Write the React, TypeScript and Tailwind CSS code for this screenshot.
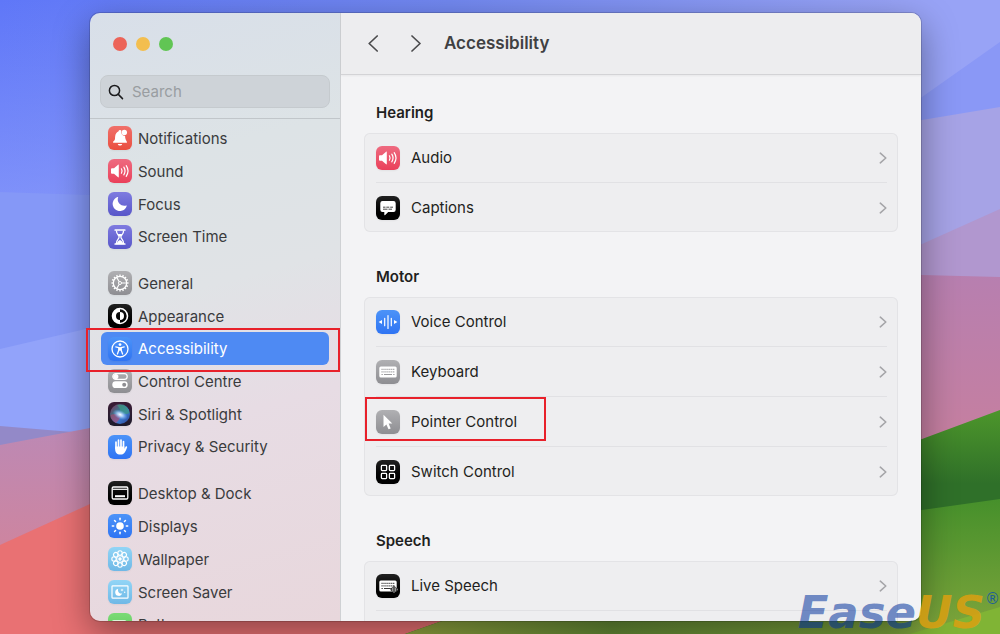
import type { ReactNode } from 'react'

interface Item {
  label: string
  icon: ReactNode
  selected?: boolean
}

interface TileProps {
  color: string
  children: ReactNode
}

interface SectionProps {
  title: string
  items: Item[]
  continues?: boolean
}

const RED = 'from-[#f0706a] to-[#ea4e3f]'
const PINK = 'from-[#ee6a80] to-[#ea3f5a]'
const INDIGO = 'from-[#7f7be0] to-[#5856c9]'
const GRAY = 'from-[#b0b0b3] to-[#8e8e92]'
const BLACK = 'from-[#222222] to-[#000000]'
const BLUE = 'from-[#4c93f8] to-[#2f74f3]'
const SKY = 'from-[#92d5f6] to-[#6fb8e6]'
const GREEN = 'from-[#7bdb76] to-[#5bc758]'

function Tile({ color, children }: TileProps) {
  return (
    <span className={`block size-6 shrink-0 rounded-md bg-linear-to-b shadow-xs ${color}`}>
      <svg viewBox="0 0 24 24" className="size-6" fill="none" stroke="none" aria-hidden="true">
        {children}
      </svg>
    </span>
  )
}

function SpeakerIcon() {
  return (
    <Tile color={PINK}>
      <path d="M3 10.2c0-.6.3-.9.9-.9h2.1l3.8-3.4c.5-.5 1-.3 1 .4v11.4c0 .7-.5.9-1 .4l-3.800-3.400H3.900c-.6 0-.9-.3-.9-.9z" fill="#fff" />
      <path d="M13.400 9.800c.8 1.300.8 3.100 0 4.400M15.800 8.200c1.500 2.300 1.500 5.300 0 7.600M18.200 6.700c2.200 3.200 2.200 7.400 0 10.600" stroke="#fff" strokeWidth="1.2" strokeLinecap="round" />
    </Tile>
  )
}

function KeyboardGlyph({ keys }: { keys: string }) {
  return (
    <>
      <rect x="3.3" y="6.500" width="17.4" height="11" rx="1.5" fill="#fff" />
      <path d="M5.5 9.300h13M5.5 11.800h13" stroke={keys} strokeWidth="1.2" strokeDasharray="1.1 0.85" />
      <path d="M5.5 14.500h1.300M8 14.500h8M17.200 14.500h1.300" stroke={keys} strokeWidth="1.1" />
    </>
  )
}

const teeth = Array.from({ length: 16 }, (_, i) => i * 22.5)
const rays = Array.from({ length: 8 }, (_, i) => i * 45)

const sidebarGroups: { height: string; items: Item[] }[] = [
  {
    height: 'h-[131px]',
    items: [
      {
        label: 'Notifications',
        icon: (
          <Tile color={RED}>
            <path d="M4.9 16.2c0-.7 2-1.700 2.100-3.200.2-3.600.5-6.300 3.400-7.500.3-1 .8-1.500 1.700-1.500.6 0 1 .3 1.300.7a3.800 3.800 0 0 0 3.700 5.200c0 4.100 2 5.300 2 6.300 0 .3-.3.500-.6.500h-13c-.3 0-.6-.2-.6-.5z" fill="#fff" />
            <path d="M9.800 17.900h4.400c-.3 1-1.100 1.600-2.200 1.600s-1.900-.6-2.200-1.600z" fill="#fff" />
            <circle cx="16.3" cy="6.500" r="2.700" fill="#fff" />
          </Tile>
        ),
      },
      { label: 'Sound', icon: <SpeakerIcon /> },
      {
        label: 'Focus',
        icon: (
          <Tile color={INDIGO}>
            <path d="M9.600 5c.4-.2.700.1.500.5-1.600 4.500 2.300 9.200 8 8 .5-.1.800.2.600.6a7.200 7.200 0 1 1-9.100-9.100z" fill="#fff" />
          </Tile>
        ),
      },
      {
        label: 'Screen Time',
        icon: (
          <Tile color={INDIGO}>
            <path d="M7.200 5h9.600M7.200 19h9.600" stroke="#fff" strokeWidth="1.7" strokeLinecap="round" />
            <path d="M8.400 5.500c0 4 2.700 4.500 2.700 6.500s-2.700 2.500-2.700 6.500h7.200c0-4-2.700-4.500-2.700-6.500s2.700-2.500 2.700-6.500" stroke="#fff" strokeWidth="1.3" />
            <path d="M9.700 9h4.600L12 12zM9 18.500c.3-2 1.700-2.800 3-3.500 1.300.7 2.700 1.500 3 3.500z" fill="#fff" />
          </Tile>
        ),
      },
    ],
  },
  {
    height: 'h-[196px]',
    items: [
      {
        label: 'General',
        icon: (
          <Tile color={GRAY}>
            <g stroke="#fff" strokeWidth="1.3">
              <circle cx="12" cy="12" r="6.700" />
              {teeth.map((angle) => (
                <path key={angle} d="M12 3.400v2" transform={`rotate(${angle} 12 12)`} />
              ))}
              <circle cx="12" cy="12" r="1.5" strokeWidth="1" />
              <path d="M13.500 12h5M11.200 10.700L8.700 6.400M11.200 13.300l-2.500 4.300" strokeWidth="1.1" />
            </g>
          </Tile>
        ),
      },
      {
        label: 'Appearance',
        icon: (
          <Tile color={BLACK}>
            <circle cx="12" cy="12" r="7.500" stroke="#fff" strokeWidth="1.6" />
            <path d="M12 4.500a7.500 7.500 0 0 0 0 15V16a4 4 0 0 1 0-8z" fill="#fff" />
            <path d="M12 8a4 4 0 0 1 0 8z" fill="#fff" />
          </Tile>
        ),
      },
      {
        label: 'Accessibility',
        selected: true,
        icon: (
          <Tile color={BLUE}>
            <circle cx="12" cy="12" r="8" stroke="#fff" strokeWidth="1.3" />
            <circle cx="12" cy="7.600" r="1.4" fill="#fff" />
            <path d="M7.800 9.900l3 .7v2.600L9.400 17M16.200 9.900l-3 .7v2.600l1.400 3.800" stroke="#fff" strokeWidth="1.3" strokeLinecap="round" strokeLinejoin="round" />
            <path d="M10.600 10.200h2.800v3.400h-2.800z" fill="#fff" />
          </Tile>
        ),
      },
      {
        label: 'Control Centre',
        icon: (
          <Tile color={GRAY}>
            <rect x="4.800" y="4.600" width="14.400" height="5.800" rx="2.900" stroke="#fff" strokeWidth="1.2" />
            <circle cx="7.800" cy="7.500" r="2.600" fill="#fff" />
            <rect x="4.300" y="12.300" width="15.400" height="6.800" rx="3.400" fill="#fff" />
            <circle cx="16.200" cy="15.700" r="2" fill="#8e8e92" />
          </Tile>
        ),
      },
      {
        label: 'Siri & Spotlight',
        icon: (
          <Tile color="from-[#3a1c35] to-[#1d1b2c]">
            <defs>
              <linearGradient id="orb" x1="0" y1="0" x2="1" y2="1">
                <stop offset="0" stopColor="#8c2b55" />
                <stop offset="0.35" stopColor="#3e6f86" />
                <stop offset="0.6" stopColor="#3f7fd0" />
                <stop offset="1" stopColor="#2b3f95" />
              </linearGradient>
              <radialGradient id="orbGlow">
                <stop offset="0" stopColor="#ffffff" />
                <stop offset="0.4" stopColor="#b9d9ff" stopOpacity="0.8" />
                <stop offset="1" stopColor="#6aa8ff" stopOpacity="0" />
              </radialGradient>
            </defs>
            <circle cx="12" cy="12" r="10" fill="url(#orb)" />
            <path d="M9 3c6-1.500 12 2 12.500 8-4 2-7.500 1-9.500 0 1-3-.5-5.500-3-8z" fill="#3d9a80" opacity="0.7" />
            <path d="M2.500 13c4-2 7.500-1 10.500 1-1 3-4 6.500-5 7-3-1.500-5.500-4-5.500-8z" fill="#b5446c" opacity="0.6" />
            <ellipse cx="12.5" cy="12.500" rx="8" ry="4.500" fill="url(#orbGlow)" transform="rotate(25 12 12)" />
          </Tile>
        ),
      },
      {
        label: 'Privacy & Security',
        icon: (
          <Tile color={BLUE}>
            <path d="M8 13.500V7.200M10.500 12V5.200M13 12V5M15.500 12.500V6.500" stroke="#fff" strokeWidth="1.7" strokeLinecap="round" />
            <path d="M7.150 11.500h9.200v2.200l1.300-2.100c.5-.8 1.800-.3 1.500.7-.7 2.300-1.500 4-2.600 5.400-1 1.300-2.300 1.900-4.200 1.900-3.600 0-5.200-2.300-5.200-5.600z" fill="#fff" />
          </Tile>
        ),
      },
    ],
  },
  {
    height: 'h-[164px]',
    items: [
      {
        label: 'Desktop & Dock',
        icon: (
          <Tile color={BLACK}>
            <rect x="4.200" y="6" width="15.600" height="12" rx="1.200" stroke="#fff" strokeWidth="1.3" />
            <path d="M4.500 8.300h15" stroke="#fff" strokeWidth="1.2" />
            <path d="M7 14.200h10v2H7z" fill="#fff" />
          </Tile>
        ),
      },
      {
        label: 'Displays',
        icon: (
          <Tile color={BLUE}>
            <circle cx="12" cy="12" r="3.800" fill="#fff" />
            {rays.map((angle) => (
              <path key={angle} d="M12 4.300v1.400" transform={`rotate(${angle} 12 12)`} stroke="#fff" strokeWidth="1.5" strokeLinecap="round" />
            ))}
          </Tile>
        ),
      },
      {
        label: 'Wallpaper',
        icon: (
          <Tile color={SKY}>
            <g stroke="#fff" strokeWidth="1.1">
              {rays.map((angle) => (
                <circle key={angle} cx="12" cy="6" r="2.200" transform={`rotate(${angle} 12 12)`} />
              ))}
              <circle cx="12" cy="12" r="3.300" />
              <circle cx="12" cy="12" r="1.200" fill="#fff" />
            </g>
          </Tile>
        ),
      },
      {
        label: 'Screen Saver',
        icon: (
          <Tile color={SKY}>
            <rect x="4" y="5.800" width="16" height="12.400" rx="0.800" stroke="#fff" strokeWidth="1.2" />
            <path d="M10.200 8.700a3.600 3.600 0 1 0 4 4.700c-2.600.8-4.900-1.600-4-4.700z" fill="#fff" />
            <path d="M14 8.500l.5 1.100 1.100.4-1.100.5-.5 1.100-.5-1.100-1.100-.5 1.100-.4z" fill="#fff" />
            <circle cx="16.700" cy="12.200" r="0.700" fill="#fff" />
          </Tile>
        ),
      },
      {
        label: 'Battery',
        icon: (
          <Tile color={GREEN}>
            <rect x="3.800" y="7.800" width="14.600" height="8.400" rx="2" stroke="#fff" strokeWidth="1.2" />
            <rect x="5.300" y="9.300" width="11.600" height="5.400" rx="1" fill="#fff" />
            <path d="M19.500 10.500c1.200.5 1.200 2.500 0 3z" fill="#fff" />
          </Tile>
        ),
      },
    ],
  },
]

const sections: SectionProps[] = [
  {
    title: 'Hearing',
    items: [
      { label: 'Audio', icon: <SpeakerIcon /> },
      {
        label: 'Captions',
        icon: (
          <Tile color={BLACK}>
            <path d="M6.500 5h11a2.200 2.200 0 0 1 2.200 2.200v6.600a2.200 2.200 0 0 1-2.200 2.200h-5.300l-3 3c-.5.4-.9.2-.9-.4V16H6.500a2.200 2.200 0 0 1-2.200-2.200V7.200A2.200 2.200 0 0 1 6.500 5z" fill="#fff" />
            <path d="M7 11.200h2.500M10.300 11.200h3M14.200 11.200H17M7 13.200h4.500M12.500 13.200h3.500" stroke="#333" strokeWidth="0.9" />
          </Tile>
        ),
      },
    ],
  },
  {
    title: 'Motor',
    items: [
      {
        label: 'Voice Control',
        icon: (
          <Tile color={BLUE}>
            <path d="M6 10v4l-3.400-2zM18 10v4l3.400-2z" fill="#fff" />
            <path d="M8.700 8.300v7.400M12 5.500v13M15.300 8.300v7.400" stroke="#fff" strokeWidth="1.2" strokeLinecap="round" />
          </Tile>
        ),
      },
      {
        label: 'Keyboard',
        icon: (
          <Tile color={GRAY}>
            <KeyboardGlyph keys="#9a9a9d" />
          </Tile>
        ),
      },
      {
        label: 'Pointer Control',
        icon: (
          <Tile color={GRAY}>
            <path d="M7.500 4.700v12.200l2.900-2.500 2.100 4.900 2.200-.9-2.100-4.800h3.700z" fill="#fff" />
          </Tile>
        ),
      },
      {
        label: 'Switch Control',
        icon: (
          <Tile color={BLACK}>
            <g stroke="#fff" strokeWidth="1.3">
              <rect x="5.400" y="5.400" width="5.200" height="5.200" rx="0.800" />
              <rect x="13.400" y="5.400" width="5.200" height="5.200" rx="0.800" />
              <rect x="5.400" y="13.400" width="5.200" height="5.200" rx="0.800" />
              <rect x="13.400" y="13.400" width="5.200" height="5.200" rx="0.800" />
            </g>
          </Tile>
        ),
      },
    ],
  },
  {
    title: 'Speech',
    continues: true,
    items: [
      {
        label: 'Live Speech',
        icon: (
          <Tile color={BLACK}>
            <KeyboardGlyph keys="#333333" />
            <path d="M18 11.500l4 4-4 4-4-4z" fill="#111" />
            <path d="M14.800 15v1M16.400 13.800v3.400M18 12.500v6M19.600 13.800v3.400M21.200 15v1" stroke="#a8a8a8" strokeWidth="1" strokeLinecap="round" />
          </Tile>
        ),
      },
    ],
  },
]

function Backdrop() {
  return (
    <svg className="absolute inset-0 size-full" viewBox="0 0 1000 634" preserveAspectRatio="none" aria-hidden="true">
      <defs>
        <linearGradient id="sky">
          <stop offset="0" stopColor="#5f77f8" />
          <stop offset="0.45" stopColor="#7288f0" />
          <stop offset="0.9" stopColor="#98a3f6" />
        </linearGradient>
        <linearGradient id="haze" x1="0" y1="0" x2="0" y2="1">
          <stop offset="0" stopColor="#96a4fb" stopOpacity="0" />
          <stop offset="1" stopColor="#96a4fb" stopOpacity="0.6" />
        </linearGradient>
        <linearGradient id="rose" x1="0" y1="0" x2="0" y2="1">
          <stop offset="0" stopColor="#b78abb" />
          <stop offset="1" stopColor="#cd85a0" />
        </linearGradient>
        <linearGradient id="mauve" x1="0" y1="0" x2="0" y2="1">
          <stop offset="0" stopColor="#b77fb0" />
          <stop offset="1" stopColor="#c67f9f" />
        </linearGradient>
        <linearGradient id="hill" x1="0" y1="410" x2="0" y2="515" gradientUnits="userSpaceOnUse">
          <stop offset="0" stopColor="#4d962b" />
          <stop offset="0.7" stopColor="#2f7029" />
          <stop offset="1" stopColor="#2f7029" />
        </linearGradient>
        <linearGradient id="meadow" x1="0" y1="0" x2="0" y2="1">
          <stop offset="0" stopColor="#46902b" />
          <stop offset="1" stopColor="#7fa53c" />
        </linearGradient>
        <linearGradient id="field">
          <stop offset="0" stopColor="#93a53f" />
          <stop offset="0.4" stopColor="#648a35" />
          <stop offset="1" stopColor="#7fa53c" />
        </linearGradient>
      </defs>
      <path d="M0 0h1000v634H0z" fill="url(#sky)" />
      <path d="M0 0h300v205H0z" fill="url(#haze)" />
      <path d="M0 192l90 3h210v239H0z" fill="#8598f7" />
      <path d="M0 349l90-21h210v106H0z" fill="#92a3fa" />
      <path d="M0 426l72 6 100 8v20H0z" fill="#9389c8" />
      <path d="M0 445l90-17 200-38v155H0z" fill="url(#rose)" />
      <path d="M0 545l90-41 210-90h300v220H0z" fill="#e97173" />
      <path d="M922 97l78-55v80H800v55z" fill="#8a98f6" />
      <path d="M800 136l122-16 78-13v150H800z" fill="#a6a3e6" />
      <path d="M800 290l122-46 78-35v80H800z" fill="#b197cf" />
      <path d="M800 272l122 3 78 2v170H800z" fill="url(#mauve)" />
      <path d="M405 634l37-13 480-182 78-29v224z" fill="url(#hill)" />
      <path d="M800 525l122-15 78-11v135H800z" fill="url(#meadow)" />
      <path d="M405 634l37-13h480v13z" fill="url(#field)" />
      <path d="M910 634l13-4 77-23v27z" fill="#80b435" />
    </svg>
  )
}

function SearchBox() {
  return (
    <label className="mx-2.5 flex h-[33px] items-center gap-2 rounded-lg border border-[#c5cace] bg-[#ced3d8] px-[7px]">
      <svg viewBox="0 0 16 16" className="size-4 shrink-0" fill="none" stroke="#1c1c1e" strokeWidth="1.5" strokeLinecap="round" aria-hidden="true">
        <circle cx="6.500" cy="6.500" r="5.100" />
        <path d="M10.300 10.400l4.200 4.200" />
      </svg>
      <input
        type="search"
        aria-label="Search"
        placeholder="Search"
        className="w-full min-w-0 bg-transparent pt-0.5 text-[15px] outline-none placeholder:text-[#999da1]"
      />
    </label>
  )
}

function Sidebar() {
  return (
    <aside className="flex w-[251px] shrink-0 flex-col border-r border-[#cfd1d4] bg-linear-[165deg,#d8dfe9_0%,#dde3e6_25%,#e0e3e6_45%,#e7dce4_65%,#e8d7dc_100%]">
      <div className="flex h-[62px] shrink-0 items-center gap-[9px] pl-[23px]">
        <button aria-label="Close" className="size-3.5 rounded-full bg-[#ec6459]" />
        <button aria-label="Minimise" className="size-3.5 rounded-full bg-[#f3be4f]" />
        <button aria-label="Zoom" className="size-3.5 rounded-full bg-[#61c554]" />
      </div>
      <div className="border-b border-[#c1c6ca] pb-2.5">
        <SearchBox />
      </div>
      <nav className="flex min-h-0 flex-1 flex-col gap-3.5 overflow-hidden px-[11px] pt-[3px]">
        {sidebarGroups.map((group, idx) => (
          <div key={idx} className={`grid shrink-0 auto-rows-fr ${group.height}`}>
            {group.items.map((item) => (
              <button
                key={item.label}
                className={`flex items-center gap-1.5 rounded-md px-[7px] text-left text-[15px] ${
                  item.selected ? 'bg-[#4e8af3] text-white' : 'text-[#3a3b3d]'
                }`}
              >
                {item.icon}
                <span className="pt-0.5">{item.label}</span>
              </button>
            ))}
          </div>
        ))}
      </nav>
    </aside>
  )
}

function Section({ title, items, continues }: SectionProps) {
  return (
    <section>
      <h2 className="mb-2.5 pt-px pl-3 text-[15px] leading-5 font-semibold text-[#1f1f21]">{title}</h2>
      <div className="divide-y divide-[#e1e1e4] rounded-md bg-[#eeeef0] pr-[11px] pl-3 ring-1 ring-[#e3e3e6] ring-inset">
        {items.map((item) => (
          <div key={item.label}>
            <button className="flex h-[49px] w-full items-center gap-[11px] text-left text-[15px] text-[#1f1f21]">
              {item.icon}
              <span className="pt-0.5">{item.label}</span>
              <svg viewBox="0 0 8 12" className="ml-auto h-3 w-2" fill="none" stroke="#a5a5a8" strokeWidth="1.6" strokeLinecap="round" strokeLinejoin="round" aria-hidden="true">
                <path d="M1.300 1.200L6.800 6l-5.500 4.800" />
              </svg>
            </button>
          </div>
        ))}
        {continues && <div className="h-[49px]" />}
      </div>
    </section>
  )
}

function Content() {
  return (
    <main className="flex min-w-0 flex-1 flex-col bg-[#f3f3f5]">
      <header className="flex h-[62px] shrink-0 items-center border-b border-[#d3d3d6] bg-[#ededef] pl-[27px] shadow-xs">
        <button aria-label="Back">
          <svg viewBox="0 0 10 18" className="h-[18px] w-2.5" fill="none" stroke="#4b4b4d" strokeWidth="1.7" strokeLinecap="round" strokeLinejoin="round">
            <path d="M9.200 1L1.200 8.500l8 7.500" />
          </svg>
        </button>
        <button aria-label="Forward" className="ml-[33px]">
          <svg viewBox="0 0 10 18" className="h-[18px] w-2.5" fill="none" stroke="#4b4b4d" strokeWidth="1.7" strokeLinecap="round" strokeLinejoin="round">
            <path d="M1 1l8 7.500-8 7.500" />
          </svg>
        </button>
        <h1 className="ml-[23px] text-[17px] font-semibold text-[#404042]">Accessibility</h1>
      </header>
      <div className="flex min-h-0 flex-1 flex-col gap-[34px] overflow-hidden px-[23px] pt-[27px]">
        {sections.map((section) => (
          <Section key={section.title} {...section} />
        ))}
      </div>
    </main>
  )
}

export default function App() {
  return (
    <div className="relative flex h-screen overflow-hidden py-[13px] pr-[79px] pl-[90px] font-['Inter','Liberation_Sans',sans-serif]">
      <Backdrop />
      <div className="relative flex min-w-0 flex-1 overflow-hidden rounded-[10px] shadow-[0_0_0_1px_rgba(0,0,0,0.15),0_12px_36px_rgba(0,0,0,0.4)]">
        <Sidebar />
        <Content />
      </div>

      {/* highlight frames */}
      <div className="absolute top-[328px] left-[86px] h-11 w-[254px] border-2 border-[#e8202a]" />
      <div className="absolute top-[397px] left-[365px] h-11 w-[181px] border-2 border-[#e8202a]" />

      {/* watermark */}
      <div className="absolute right-0 bottom-0 flex items-start font-['DejaVu_Sans',sans-serif] leading-[42px]">
        <span className="text-[45px] font-bold text-[#00309c]/55 italic">Ease</span>
        <span className="text-[45px] font-bold text-[#dca011]/85 italic">US</span>
        <span className="text-[15px] leading-none text-[#1f5f96]">®</span>
      </div>
    </div>
  )
}
